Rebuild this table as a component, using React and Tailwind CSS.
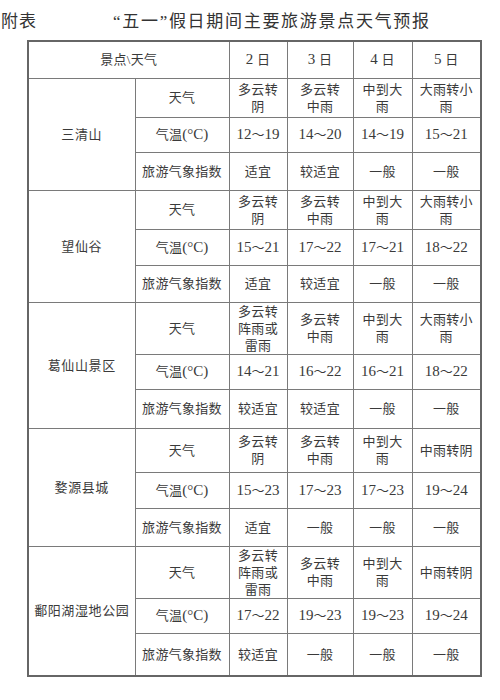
import React from 'react'

const days = ['2', '3', '4', '5']

const spots = [
  {
    name: '三清山',
    h: [39, 35, 38],
    weather: [['多云转', '阴'], ['多云转', '中雨'], ['中到大', '雨'], ['大雨转小', '雨']],
    temp: ['12～19', '14～20', '14～19', '15～21'],
    index: ['适宜', '较适宜', '一般', '一般'],
  },
  {
    name: '望仙谷',
    h: [39, 36, 37],
    weather: [['多云转', '阴'], ['多云转', '中雨'], ['中到大', '雨'], ['大雨转小', '雨']],
    temp: ['15～21', '17～22', '17～21', '18～22'],
    index: ['适宜', '较适宜', '一般', '一般'],
  },
  {
    name: '葛仙山景区',
    h: [51, 35, 39],
    weather: [['多云转', '阵雨或', '雷雨'], ['多云转', '中雨'], ['中到大', '雨'], ['大雨转小', '雨']],
    temp: ['14～21', '16～22', '16～21', '18～22'],
    index: ['较适宜', '较适宜', '一般', '一般'],
  },
  {
    name: '婺源县城',
    h: [44, 36, 38],
    weather: [['多云转', '阴'], ['多云转', '中雨'], ['中到大', '雨'], ['中雨转阴']],
    temp: ['15～23', '17～23', '17～23', '19～24'],
    index: ['适宜', '一般', '一般', '一般'],
  },
  {
    name: '鄱阳湖湿地公园',
    h: [52, 35, 43],
    weather: [['多云转', '阵雨或', '雷雨'], ['多云转', '中雨'], ['中到大', '雨'], ['中雨转阴']],
    temp: ['17～22', '19～23', '19～23', '19～24'],
    index: ['较适宜', '一般', '一般', '一般'],
  },
]

const cell = 'border border-[#7a7a7a] text-center align-middle p-0'

// 数字用 Times 风格，略大于汉字
const Temp = ({ value }) => {
  const [a, b] = value.split('～')
  return (
    <span className="text-[15px] tracking-normal">
      {a}
      <span className="text-[13px]">～</span>
      {b}
    </span>
  )
}

const App = () => {
  return (
    <div className="w-[500px] h-[700px] bg-white text-[#3a3a3a] font-['Liberation_Serif','Noto_Sans_CJK_SC',serif]">
      <div className="flex pt-[12px] text-[17px] leading-[20px] text-[#333]">
        <span className="pl-[1px] tracking-[1px]">附表</span>
        <span className="ml-[76px] tracking-[1.7px]">“五一”假日期间主要旅游景点天气预报</span>
      </div>

      <table className="mt-[8px] ml-[27px] w-[453px] table-fixed border-collapse border-2 border-[#666] text-[13px] leading-[17px] tracking-[0.3px]">
        <colgroup>
          <col className="w-[107px]" />
          <col className="w-[94px]" />
          <col className="w-[58px]" />
          <col className="w-[66px]" />
          <col className="w-[59px]" />
          <col className="w-[69px]" />
        </colgroup>
        <tbody>
          <tr className="h-[37px]">
            <td colSpan={2} className={cell}>景点\天气</td>
            {days.map((d) => (
              <td key={d} className={cell}>
                <span className="text-[15px]">{d}</span> 日
              </td>
            ))}
          </tr>
          {spots.map((s) => (
            <React.Fragment key={s.name}>
              <tr style={{ height: s.h[0] }}>
                <td rowSpan={3} className={`${cell} tracking-[0.6px]`}>{s.name}</td>
                <td className={cell}>天气</td>
                {s.weather.map((w, i) => (
                  <td key={i} className={cell}>
                    {w.map((line, j) => (
                      <div key={j}>{line}</div>
                    ))}
                  </td>
                ))}
              </tr>
              <tr style={{ height: s.h[1] }}>
                <td className={cell}>
                  气温<span className="text-[15px] tracking-normal">(°C)</span>
                </td>
                {s.temp.map((t, i) => (
                  <td key={i} className={cell}>
                    <Temp value={t} />
                  </td>
                ))}
              </tr>
              <tr style={{ height: s.h[2] }}>
                <td className={cell}>旅游气象指数</td>
                {s.index.map((t, i) => (
                  <td key={i} className={cell}>{t}</td>
                ))}
              </tr>
            </React.Fragment>
          ))}
        </tbody>
      </table>
    </div>
  )
}

export default App
